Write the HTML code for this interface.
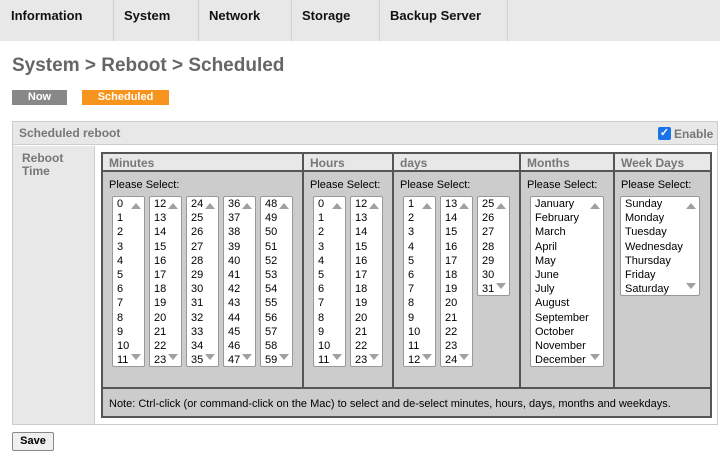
<!DOCTYPE html>
<html><head><meta charset="utf-8"><style>
*{margin:0;padding:0;box-sizing:border-box}
body{width:720px;height:460px;background:#fff;font-family:"Liberation Sans",Arial,sans-serif;font-size:11px;color:#000;position:relative;overflow:hidden}
.a{position:absolute}
.nav{left:0;top:0;width:720px;height:41px;background:#e8e8e8}
.tab{position:absolute;top:8px;font-weight:bold;font-size:13px;color:#111}
.sep{position:absolute;top:0;width:1px;height:41px;background:#d0d0d0}
.title{left:12px;top:55px;font-size:19px;font-weight:bold;color:#666}
.btn{top:90px;height:15px;color:#fff;font-weight:bold;font-size:11px;text-align:center;line-height:15px}
.hd{color:#777;font-weight:bold;font-size:12px}
.sel{position:absolute;top:196px;height:171px;background:#fff;border:1px solid #999;border-radius:2px;padding:0 0 0 4px;line-height:14.2px;font-size:11px;white-space:pre}
.up,.dn{position:absolute;right:3px;width:0;height:0;border-left:5px solid transparent;border-right:5px solid transparent}
.up{top:6px;border-bottom:6px solid #a0a0a0}
.dn{bottom:6px;border-top:6px solid #a0a0a0}
.ps{position:absolute;top:179px;font-size:11px}
.vl{position:absolute;top:152px;width:2px;height:237px;background:#555}
</style></head><body>
<div class="a nav">
<span class="tab" style="left:11px">Information</span>
<div class="sep" style="left:113px"></div>
<span class="tab" style="left:124px">System</span>
<div class="sep" style="left:198px"></div>
<span class="tab" style="left:209px">Network</span>
<div class="sep" style="left:291px"></div>
<span class="tab" style="left:302px">Storage</span>
<div class="sep" style="left:379px"></div>
<span class="tab" style="left:390px">Backup Server</span>
<div class="sep" style="left:507px"></div>
</div>
<div class="a title">System &gt; Reboot &gt; Scheduled</div>
<div class="a btn" style="left:12px;width:55px;background:#888">Now</div>
<div class="a btn" style="left:82px;width:87px;background:#f7941d">Scheduled</div>

<div class="a" style="left:12px;top:121px;width:706px;height:304px;border:1px solid #ccc;background:#fff"></div>
<div class="a" style="left:13px;top:122px;width:704px;height:23px;background:#e8e8e8;border-bottom:1px solid #ccc"></div>
<div class="a hd" style="left:19px;top:126px">Scheduled reboot</div>
<div class="a" style="left:658px;top:127px;width:13px;height:13px;background:#1a73e8;border-radius:2px;color:#fff;font-size:11px;line-height:13px;text-align:center;font-weight:bold">✓</div>
<div class="a hd" style="left:674px;top:127px">Enable</div>
<div class="a" style="left:13px;top:146px;width:82px;height:278px;background:#e8e8e8;border-right:1px solid #ccc"></div>
<div class="a hd" style="left:22px;top:152px;line-height:13px">Reboot<br>Time</div>

<div class="a" style="left:101px;top:152px;width:611px;height:266px;border:2px solid #555;background:#ccc"></div>
<div class="a" style="left:103px;top:154px;width:607px;height:18px;background:#e8e8e8;border-bottom:2px solid #555"></div>
<div class="a" style="left:103px;top:387px;width:607px;height:2px;background:#555"></div>
<div class="vl" style="left:302px"></div>
<div class="vl" style="left:392px"></div>
<div class="vl" style="left:519px"></div>
<div class="vl" style="left:613px"></div>
<div class="a hd" style="left:109px;top:156px">Minutes</div>
<div class="a hd" style="left:310px;top:156px">Hours</div>
<div class="a hd" style="left:400px;top:156px">days</div>
<div class="a hd" style="left:527px;top:156px">Months</div>
<div class="a hd" style="left:621px;top:156px">Week Days</div>

<div class="ps" style="left:109px">Please Select:</div>
<div class="ps" style="left:310px">Please Select:</div>
<div class="ps" style="left:400px">Please Select:</div>
<div class="ps" style="left:527px">Please Select:</div>
<div class="ps" style="left:621px">Please Select:</div>

<div class="sel" style="left:112px;width:33px">0
1
2
3
4
5
6
7
8
9
10
11<i class="up"></i><i class="dn"></i></div>
<div class="sel" style="left:149px;width:33px">12
13
14
15
16
17
18
19
20
21
22
23<i class="up"></i><i class="dn"></i></div>
<div class="sel" style="left:186px;width:33px">24
25
26
27
28
29
30
31
32
33
34
35<i class="up"></i><i class="dn"></i></div>
<div class="sel" style="left:223px;width:33px">36
37
38
39
40
41
42
43
44
45
46
47<i class="up"></i><i class="dn"></i></div>
<div class="sel" style="left:260px;width:33px">48
49
50
51
52
53
54
55
56
57
58
59<i class="up"></i><i class="dn"></i></div>

<div class="sel" style="left:313px;width:33px">0
1
2
3
4
5
6
7
8
9
10
11<i class="up"></i><i class="dn"></i></div>
<div class="sel" style="left:350px;width:33px">12
13
14
15
16
17
18
19
20
21
22
23<i class="up"></i><i class="dn"></i></div>

<div class="sel" style="left:403px;width:33px">1
2
3
4
5
6
7
8
9
10
11
12<i class="up"></i><i class="dn"></i></div>
<div class="sel" style="left:440px;width:33px">13
14
15
16
17
18
19
20
21
22
23
24<i class="up"></i><i class="dn"></i></div>
<div class="sel" style="left:477px;width:33px;height:100px">25
26
27
28
29
30
31<i class="up"></i><i class="dn"></i></div>

<div class="sel" style="left:530px;width:74px">January
February
March
April
May
June
July
August
September
October
November
December<i class="up"></i><i class="dn"></i></div>
<div class="sel" style="left:620px;width:80px;height:100px">Sunday
Monday
Tuesday
Wednesday
Thursday
Friday
Saturday<i class="up"></i><i class="dn"></i></div>

<div class="a" style="left:109px;top:398px;font-size:11px">Note: Ctrl-click (or command-click on the Mac) to select and de-select minutes, hours, days, months and weekdays.</div>

<div class="a" style="left:12px;top:432px;width:42px;height:19px;border:1px solid #888;border-radius:2px;background:#f0f0f0;font-weight:bold;font-size:11px;text-align:center;line-height:17px">Save</div>
</body></html>
